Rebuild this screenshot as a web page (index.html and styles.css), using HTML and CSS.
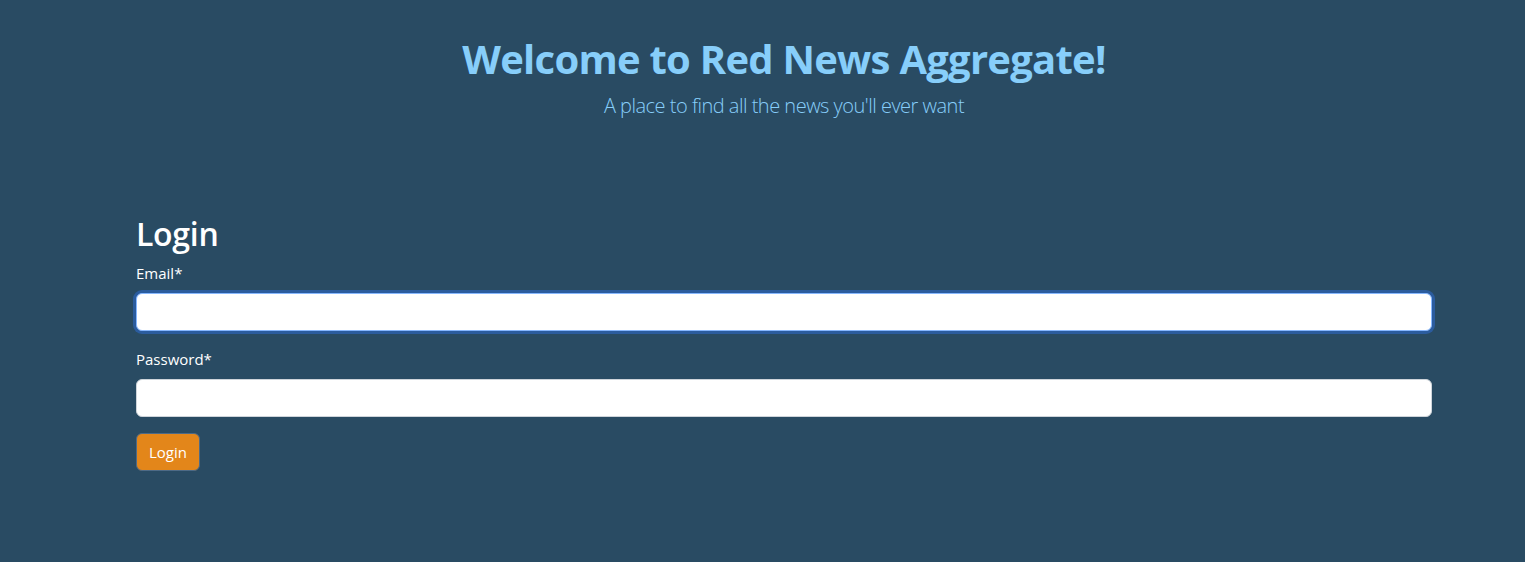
FILE: index.html
```html
<!DOCTYPE html>
<html lang="en">
<head>
<meta charset="utf-8">
<title>Red News Aggregate</title>
<link rel="stylesheet" href="styles.css">
</head>
<body>
<div class="page">
  <header class="hero">
    <h1 class="hero-title">Welcome to Red News Aggregate!</h1>
    <p class="hero-lead">A place to find all the news you'll ever want</p>
  </header>
  <main class="container">
    <h2 class="login-title">Login</h2>
    <form class="login-form">
      <div class="field">
        <label class="field-label" for="email">Email*</label>
        <input class="field-input field-input--focus" id="email" type="email">
      </div>
      <div class="field">
        <label class="field-label" for="password">Password*</label>
        <input class="field-input" id="password" type="password">
      </div>
      <button class="btn-login" type="button">Login</button>
    </form>
  </main>
</div>
</body>
</html>
```
FILE: styles.css
```css
html, body {
  margin: 0;
  padding: 0;
  background: #294b63;
  height: 100%;
}
body {
  font-family: "Open Sans", "Noto Sans", sans-serif;
  color: #ffffff;
}
.page {
  padding-left: 43px;
  box-sizing: border-box;
}
.hero {
  text-align: center;
  padding-top: 35px;
  padding-bottom: 94px;
}
.hero-title {
  margin: 0 0 8px;
  font-size: 40px;
  line-height: 48px;
  font-weight: 700;
  letter-spacing: -0.75px;
  color: #87cefa;
}
.hero-lead {
  margin: 0;
  font-size: 20px;
  line-height: 30px;
  font-weight: 300;
  letter-spacing: -0.5px;
  color: #87cefa;
}
.container {
  width: 1296px;
  margin: 0 auto;
}
.login-title {
  margin: 0 0 8px;
  font-size: 32px;
  line-height: 38px;
  font-weight: 600;
  letter-spacing: -0.3px;
}
.field {
  margin-bottom: 16px;
}
.field-label {
  display: block;
  font-size: 15px;
  line-height: 24px;
  margin-bottom: 8px;
}
.field-input {
  display: block;
  box-sizing: border-box;
  width: 100%;
  height: 38px;
  border: 1px solid #ced4da;
  border-radius: 6px;
  background: #ffffff;
  padding: 6px 12px;
  font-size: 16px;
  outline: none;
}
.field-input--focus {
  border-color: #86b7fe;
  box-shadow: 0 0 0 3px #2b5c9e;
}
.btn-login {
  display: block;
  box-sizing: border-box;
  height: 38px;
  padding: 0 12px;
  background: #e3861a;
  border: 1px solid #4d6a86;
  border-radius: 6px;
  color: #ffffff;
  font-family: inherit;
  font-size: 15px;
}
```
